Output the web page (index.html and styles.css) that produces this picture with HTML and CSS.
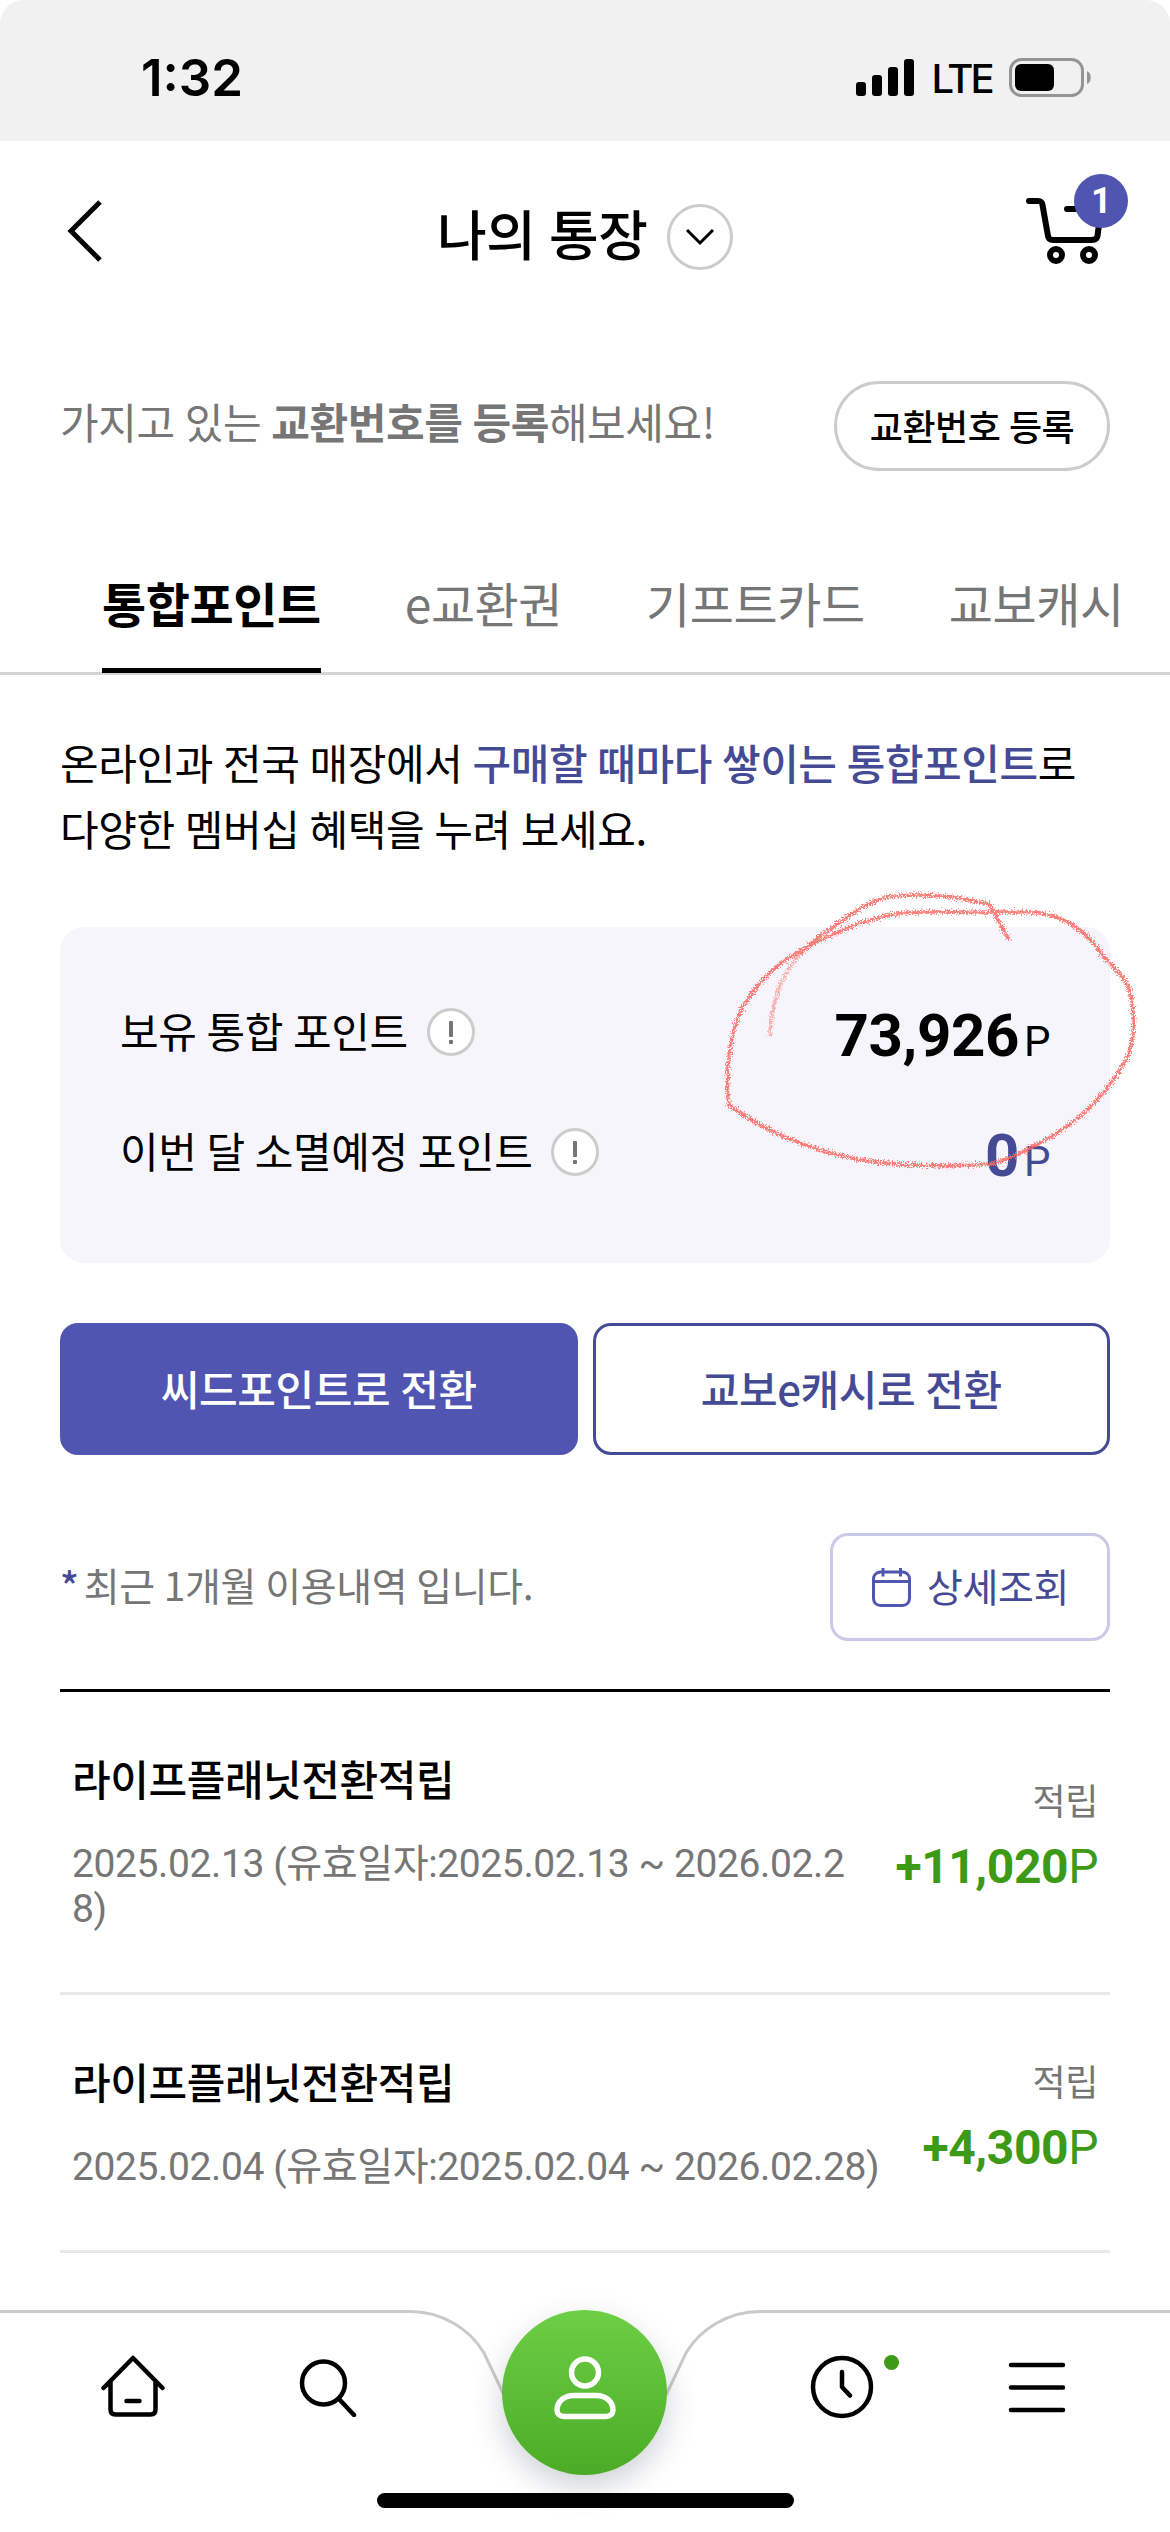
FILE: index.html
```html
<!DOCTYPE html>
<html lang="ko">
<head>
  <meta charset="UTF-8" />
  <meta name="viewport" content="width=device-width, initial-scale=1.0" />
  <title>나의 통장</title>
  <link rel="stylesheet" href="styles.css">
</head>
<body>
  <div class="status-bar">
    <span class="time">1:32</span>
    <div class="status-icons">
      <svg class="signal" width="58" height="38" viewBox="0 0 58 38">
        <rect x="0" y="23" width="10" height="14" rx="3"/>
        <rect x="16" y="16" width="10" height="21" rx="3"/>
        <rect x="32" y="8" width="10" height="29" rx="3"/>
        <rect x="48" y="0" width="10" height="37" rx="3"/>
      </svg>
      <span class="network">LTE</span>
      <svg class="battery" width="82" height="39" viewBox="0 0 82 39">
        <rect x="1.5" y="1.5" width="72" height="36" rx="11" fill="none" stroke="#949494" stroke-width="3"/>
        <rect x="6" y="6" width="39" height="27" rx="6"/>
        <path d="M78 13c5 2 5 11 0 13z" fill="#949494"/>
      </svg>
    </div>
  </div>

  <header class="header">
    <button class="back-btn" type="button" aria-label="뒤로">
      <svg width="36" height="62" viewBox="0 0 36 62" fill="none" stroke="#000" stroke-width="5"><path d="M33 2L4 31l29 29"/></svg>
    </button>
    <h1>나의 통장</h1>
    <button class="drop-btn" type="button" aria-label="메뉴 열기">
      <svg width="30" height="18" viewBox="0 0 30 18" fill="none" stroke="#000" stroke-width="3"><path d="M2 2l13 13L28 2"/></svg>
    </button>
    <a class="cart" href="#">
      <svg width="76" height="66" viewBox="0 0 76 66" fill="none" stroke="#000" stroke-width="6" stroke-linecap="round" stroke-linejoin="round">
        <path d="M3 3h9c3 0 4 1 4.500 4l5.500 31c.5 3 2 4 5 4h39c3 0 5-1 5.500-4L75 11H41"/>
        <circle cx="30" cy="57" r="6"/>
        <circle cx="63" cy="57" r="6"/>
      </svg>
      <span class="badge">1</span>
    </a>
  </header>

  <div class="register">
    <p>가지고 있는 <b>교환번호를 등록</b>해보세요!</p>
    <button type="button">교환번호 등록</button>
  </div>

  <nav class="tabs">
    <a class="active" href="#">통합포인트</a>
    <a href="#">e교환권</a>
    <a href="#">기프트카드</a>
    <a href="#">교보캐시</a>
  </nav>

  <main>
    <p class="intro">온라인과 전국 매장에서 <b>구매할 때마다 쌓이는 통합포인트</b>로<br>다양한 멤버십 혜택을 누려 보세요.</p>

    <section class="point-box">
      <div class="point-row">
        <span class="label">보유 통합 포인트</span>
        <span class="info"></span>
        <span class="value"><b>73,926</b>P</span>
      </div>
      <div class="point-row">
        <span class="label">이번 달 소멸예정 포인트</span>
        <span class="info"></span>
        <span class="value purple"><b>0</b>P</span>
      </div>
      <svg class="scribble" width="470" height="330" viewBox="0 0 470 330">
        <filter id="crayon" x="-5%" y="-5%" width="110%" height="110%">
          <feTurbulence type="fractalNoise" baseFrequency="0.7" numOctaves="2" seed="4"/>
          <feDisplacementMap in="SourceGraphic" scale="9" xChannelSelector="R" yChannelSelector="G"/>
        </filter>
        <g filter="url(#crayon)">
          <path class="faint" d="M69 167C70 130 80 108 98 85"/>
          <path d="M98 85C112 70 124 62 142 50C160 38 175 28 188 27C215 23 245 24 288 34C297 46 299 58 309 70"/>
          <path d="M142 60C165 50 190 42 220 42H330C360 44 383 57 402 86C416 101 427 110 430 125C434 150 434 170 425 190C406 223 385 245 350 267C325 280 312 288 290 294C250 297 200 296 160 290C110 280 65 262 28 235C24 205 28 165 41 138C60 105 85 84 142 60"/>
        </g>
      </svg>
    </section>

    <div class="convert">
      <button class="btn-fill" type="button">씨드포인트로 전환</button>
      <button class="btn-line" type="button">교보e캐시로 전환</button>
    </div>

    <div class="history-head">
      <p><span class="star">*</span> 최근 1개월 이용내역 입니다.</p>
      <button type="button">
        <svg width="42" height="42" viewBox="0 0 42 42" fill="none" stroke="#5055b1" stroke-width="3">
          <rect x="2.500" y="6" width="36" height="33.500" rx="7"/>
          <path d="M2.500 15.500h36M12 2v8.500M29.500 2v8.500"/>
        </svg>
        <span>상세조회</span>
      </button>
    </div>

    <ul class="history">
      <li>
        <div class="detail">
          <strong>라이프플래닛전환적립</strong>
          <p>2025.02.13 (유효일자:2025.02.13 ~ 2026.02.28)</p>
        </div>
        <div class="amount">
          <span>적립</span>
          <p><b>+11,020</b>P</p>
        </div>
      </li>
      <li>
        <div class="detail">
          <strong>라이프플래닛전환적립</strong>
          <p>2025.02.04 (유효일자:2025.02.04 ~ 2026.02.28)</p>
        </div>
        <div class="amount">
          <span>적립</span>
          <p><b>+4,300</b>P</p>
        </div>
      </li>
    </ul>
  </main>

  <footer class="bottom-nav">
    <svg class="nav-line" width="1170" height="100" viewBox="0 0 1170 100" fill="none" stroke="#cacaca" stroke-width="3">
      <path d="M0 2.500H410C442 2.500 470 20 484 44L504 86M666 86L686 44C700 20 728 2.500 760 2.500H1170"/>
    </svg>
    <a class="home" href="#">
      <svg width="64" height="72" viewBox="0 0 64 72" fill="none" stroke="#000" stroke-width="4.500" stroke-linecap="round" stroke-linejoin="round">
        <path d="M2.500 36L32 6l29.500 30M9.500 30v27.500q0 5 5 5h35q5 0 5-5V30M25.500 49h13"/>
      </svg>
    </a>
    <a class="search" href="#">
      <svg width="60" height="60" viewBox="0 0 60 60" fill="none" stroke="#000" stroke-width="4.500" stroke-linecap="round">
        <circle cx="24.500" cy="26" r="21.500"/>
        <path d="M40 42l15 16"/>
      </svg>
    </a>
    <a class="my" href="#">
      <svg width="62" height="66" viewBox="0 0 62 66" fill="none" stroke="#fff" stroke-width="5.500">
        <circle cx="31" cy="17.500" r="13.500"/>
        <path d="M20 40.500h22c10 0 17 6 17 14.500 0 4-3 6.500-7 6.500H10c-4 0-7-2.500-7-6.500 0-8.500 7-14.500 17-14.500z"/>
      </svg>
    </a>
    <a class="recent" href="#">
      <svg width="64" height="64" viewBox="0 0 64 64" fill="none" stroke="#000" stroke-width="4.500" stroke-linecap="round" stroke-linejoin="round">
        <circle cx="32" cy="32" r="29"/>
        <path d="M32 17v15l8 8.500"/>
      </svg>
      <span class="dot"></span>
    </a>
    <a class="menu" href="#">
      <svg width="58" height="52" viewBox="0 0 58 52" fill="none" stroke="#000" stroke-width="4.500" stroke-linecap="round"><path d="M3 3h52M3 25.500h52M3 48h52"/></svg>
    </a>
    <div class="home-indicator"></div>
  </footer>
</body>
</html>
```
FILE: styles.css
```css
* {
  box-sizing: border-box;
  margin: 0;
  padding: 0;
}
body {
  width: 1170px;
  height: 2532px;
  display: flex;
  flex-direction: column;
  overflow: hidden;
  background-color: #fff;
  color: #000;
  font-family: 'Noto Sans CJK KR', sans-serif;
  font-size: 42px;
  letter-spacing: -0.01em;
  word-spacing: -0.03em;
}
a {
  color: inherit;
  text-decoration: none;
}
button {
  border: none;
  background: none;
  color: inherit;
  font: inherit;
  letter-spacing: inherit;
  word-spacing: inherit;
}
svg {
  display: block;
  flex: none;
}
.status-bar {
  height: 141px;
  padding: 14px 79px 0 141px;
  display: flex;
  align-items: center;
  justify-content: space-between;
  background-color: #f1f1f1;
  border-radius: 24px 24px 0 0;
  font-family: Inter, sans-serif;
}
.time {
  font-size: 51px;
  font-weight: 600;
  letter-spacing: 0;
}
.status-icons {
  display: flex;
  align-items: center;
}
.network {
  width: 95px;
  padding-top: 2px;
  text-align: center;
  font-size: 40px;
  font-weight: 500;
  letter-spacing: -3px;
}
.header {
  height: 189px;
  padding: 0 42px 0 67px;
  display: grid;
  grid-template-columns: 370px auto 66px 1fr;
  align-items: center;
}
.back-btn {
  padding-bottom: 10px;
}
.header h1 {
  margin-right: 20px;
  padding-bottom: 6px;
  font-size: 54px;
  font-weight: 500;
}
.drop-btn {
  width: 66px;
  height: 66px;
  margin-top: 3px;
  display: flex;
  align-items: center;
  justify-content: center;
  border: 3px solid #ccc;
  border-radius: 50%;
}
.cart {
  position: relative;
  justify-self: end;
  margin: 0 26px 9px 0;
}
.badge {
  position: absolute;
  top: -24px;
  right: -26px;
  width: 54px;
  height: 54px;
  line-height: 54px;
  text-align: center;
  background-color: #5055b1;
  color: #fff;
  border-radius: 50%;
  font-family: Roboto, sans-serif;
  font-size: 36px;
  font-weight: 700;
}
.register {
  height: 192px;
  padding: 0 60px;
  display: flex;
  align-items: center;
  justify-content: space-between;
  color: #767676;
}
.register p {
  padding-bottom: 12px;
}
.register button {
  width: 276px;
  height: 90px;
  padding-bottom: 2px;
  border: 3px solid #ccc;
  border-radius: 45px;
  color: #000;
  font-size: 36px;
  font-weight: 500;
}
.tabs {
  height: 153px;
  padding-left: 102px;
  display: flex;
  gap: 84px;
  border-bottom: 3px solid #d4d4d4;
  white-space: nowrap;
  font-size: 48px;
  color: #767676;
}
.tabs a {
  height: 151px;
  padding-top: 45px;
}
.tabs .active {
  color: #000;
  font-weight: 700;
  border-bottom: 5px solid #000;
}
main {
  padding: 0 60px;
}
.intro {
  padding-top: 54px;
  line-height: 66px;
}
.intro b {
  color: #454a95;
  font-weight: 500;
}
.point-box {
  position: relative;
  height: 336px;
  margin-top: 66px;
  padding: 45px 60px;
  background-color: #f6f5fb;
  border-radius: 24px;
}
.point-row {
  height: 120px;
  display: flex;
  align-items: center;
}
.label {
  padding-bottom: 6px;
}
.info {
  width: 48px;
  height: 48px;
  margin-left: 19px;
  display: flex;
  flex-direction: column;
  align-items: center;
  justify-content: center;
  gap: 3px;
  background-color: #fff;
  border: 3px solid #ccc;
  border-radius: 50%;
}
.info::before,
.info::after {
  content: '';
  width: 4px;
  height: 16px;
  background-color: #767676;
  border-radius: 1px;
}
.info::after {
  height: 4px;
}
.value {
  margin-left: auto;
  padding-top: 6px;
  font-family: Roboto, sans-serif;
  font-size: 42px;
}
.value b {
  margin-right: 5px;
  font-size: 60px;
}
.purple {
  color: #454a95;
}
/* hand drawn circle around the balance */
.scribble {
  position: absolute;
  left: 641px;
  top: -57px;
  fill: none;
  stroke: #fb6a63;
  stroke-width: 3.5;
  opacity: 0.85;
}
.faint {
  opacity: 0.55;
}
.convert {
  margin-top: 60px;
  display: grid;
  grid-template-columns: 1fr 1fr;
  gap: 15px;
}
.convert button {
  height: 132px;
  padding-bottom: 4px;
  border: 3px solid #454a95;
  border-radius: 18px;
  font-weight: 500;
  color: #454a95;
}
.convert .btn-fill {
  background-color: #5055b1;
  border-color: #5055b1;
  color: #fff;
}
.history-head {
  height: 108px;
  margin-top: 78px;
  display: flex;
  align-items: center;
  justify-content: space-between;
  color: #767676;
  font-size: 39px;
}
.history-head p {
  padding-bottom: 6px;
}
.star {
  margin-right: -4px;
  color: #454a95;
  font-weight: 500;
}
.history-head button {
  width: 280px;
  height: 108px;
  display: flex;
  align-items: center;
  justify-content: center;
  gap: 14px;
  border: 3px solid #cacae8;
  border-radius: 18px;
  color: #454a95;
  font-size: 39px;
}
.history-head button span {
  padding-bottom: 4px;
}
.history {
  margin-top: 48px;
  border-top: 3px solid #000;
  list-style: none;
}
.history li {
  padding: 54px 12px 60px;
  display: flex;
  align-items: center;
  gap: 36px;
  border-bottom: 3px solid #e9e9e9;
}
.detail {
  flex: 1;
}
.detail strong {
  display: block;
  line-height: 63px;
  font-weight: 500;
}
.detail p {
  margin-top: 33px;
  line-height: 45px;
  word-break: break-all;
  font-family: Roboto, 'Noto Sans CJK KR', sans-serif;
  font-size: 39px;
  letter-spacing: -0.39px;
  word-spacing: 0;
  color: #767676;
}
.amount {
  padding-bottom: 10px;
  text-align: right;
  color: #767676;
  font-size: 36px;
}
.amount p {
  margin-top: 13px;
  color: #3c9a17;
  font-family: Roboto, sans-serif;
  font-size: 48px;
}
.bottom-nav {
  position: absolute;
  left: 0;
  top: 2309px;
  width: 1170px;
  height: 223px;
  padding-left: 101px;
  display: flex;
  align-items: flex-start;
}
.nav-line {
  position: absolute;
  left: 0;
  top: 0;
}
.home {
  margin-top: 43px;
}
.search {
  margin: 48px 0 0 134px;
}
.my {
  position: relative;
  width: 165px;
  height: 165px;
  margin: 1px 143px 0;
  padding-bottom: 10px;
  display: flex;
  align-items: center;
  justify-content: center;
  background: linear-gradient(#6ccf45, #4bab26);
  border-radius: 50%;
  box-shadow: 0 12px 30px rgba(60, 70, 90, 0.25);
}
.recent {
  position: relative;
  margin-top: 46px;
}
.menu {
  margin: 53px 0 0 134px;
}
.dot {
  position: absolute;
  left: 74px;
  top: 0;
  width: 15px;
  height: 15px;
  background-color: #3c9a17;
  border-radius: 50%;
}
.home-indicator {
  position: absolute;
  left: 377px;
  bottom: 24px;
  width: 417px;
  height: 15px;
  background-color: #000;
  border-radius: 8px;
}
```
